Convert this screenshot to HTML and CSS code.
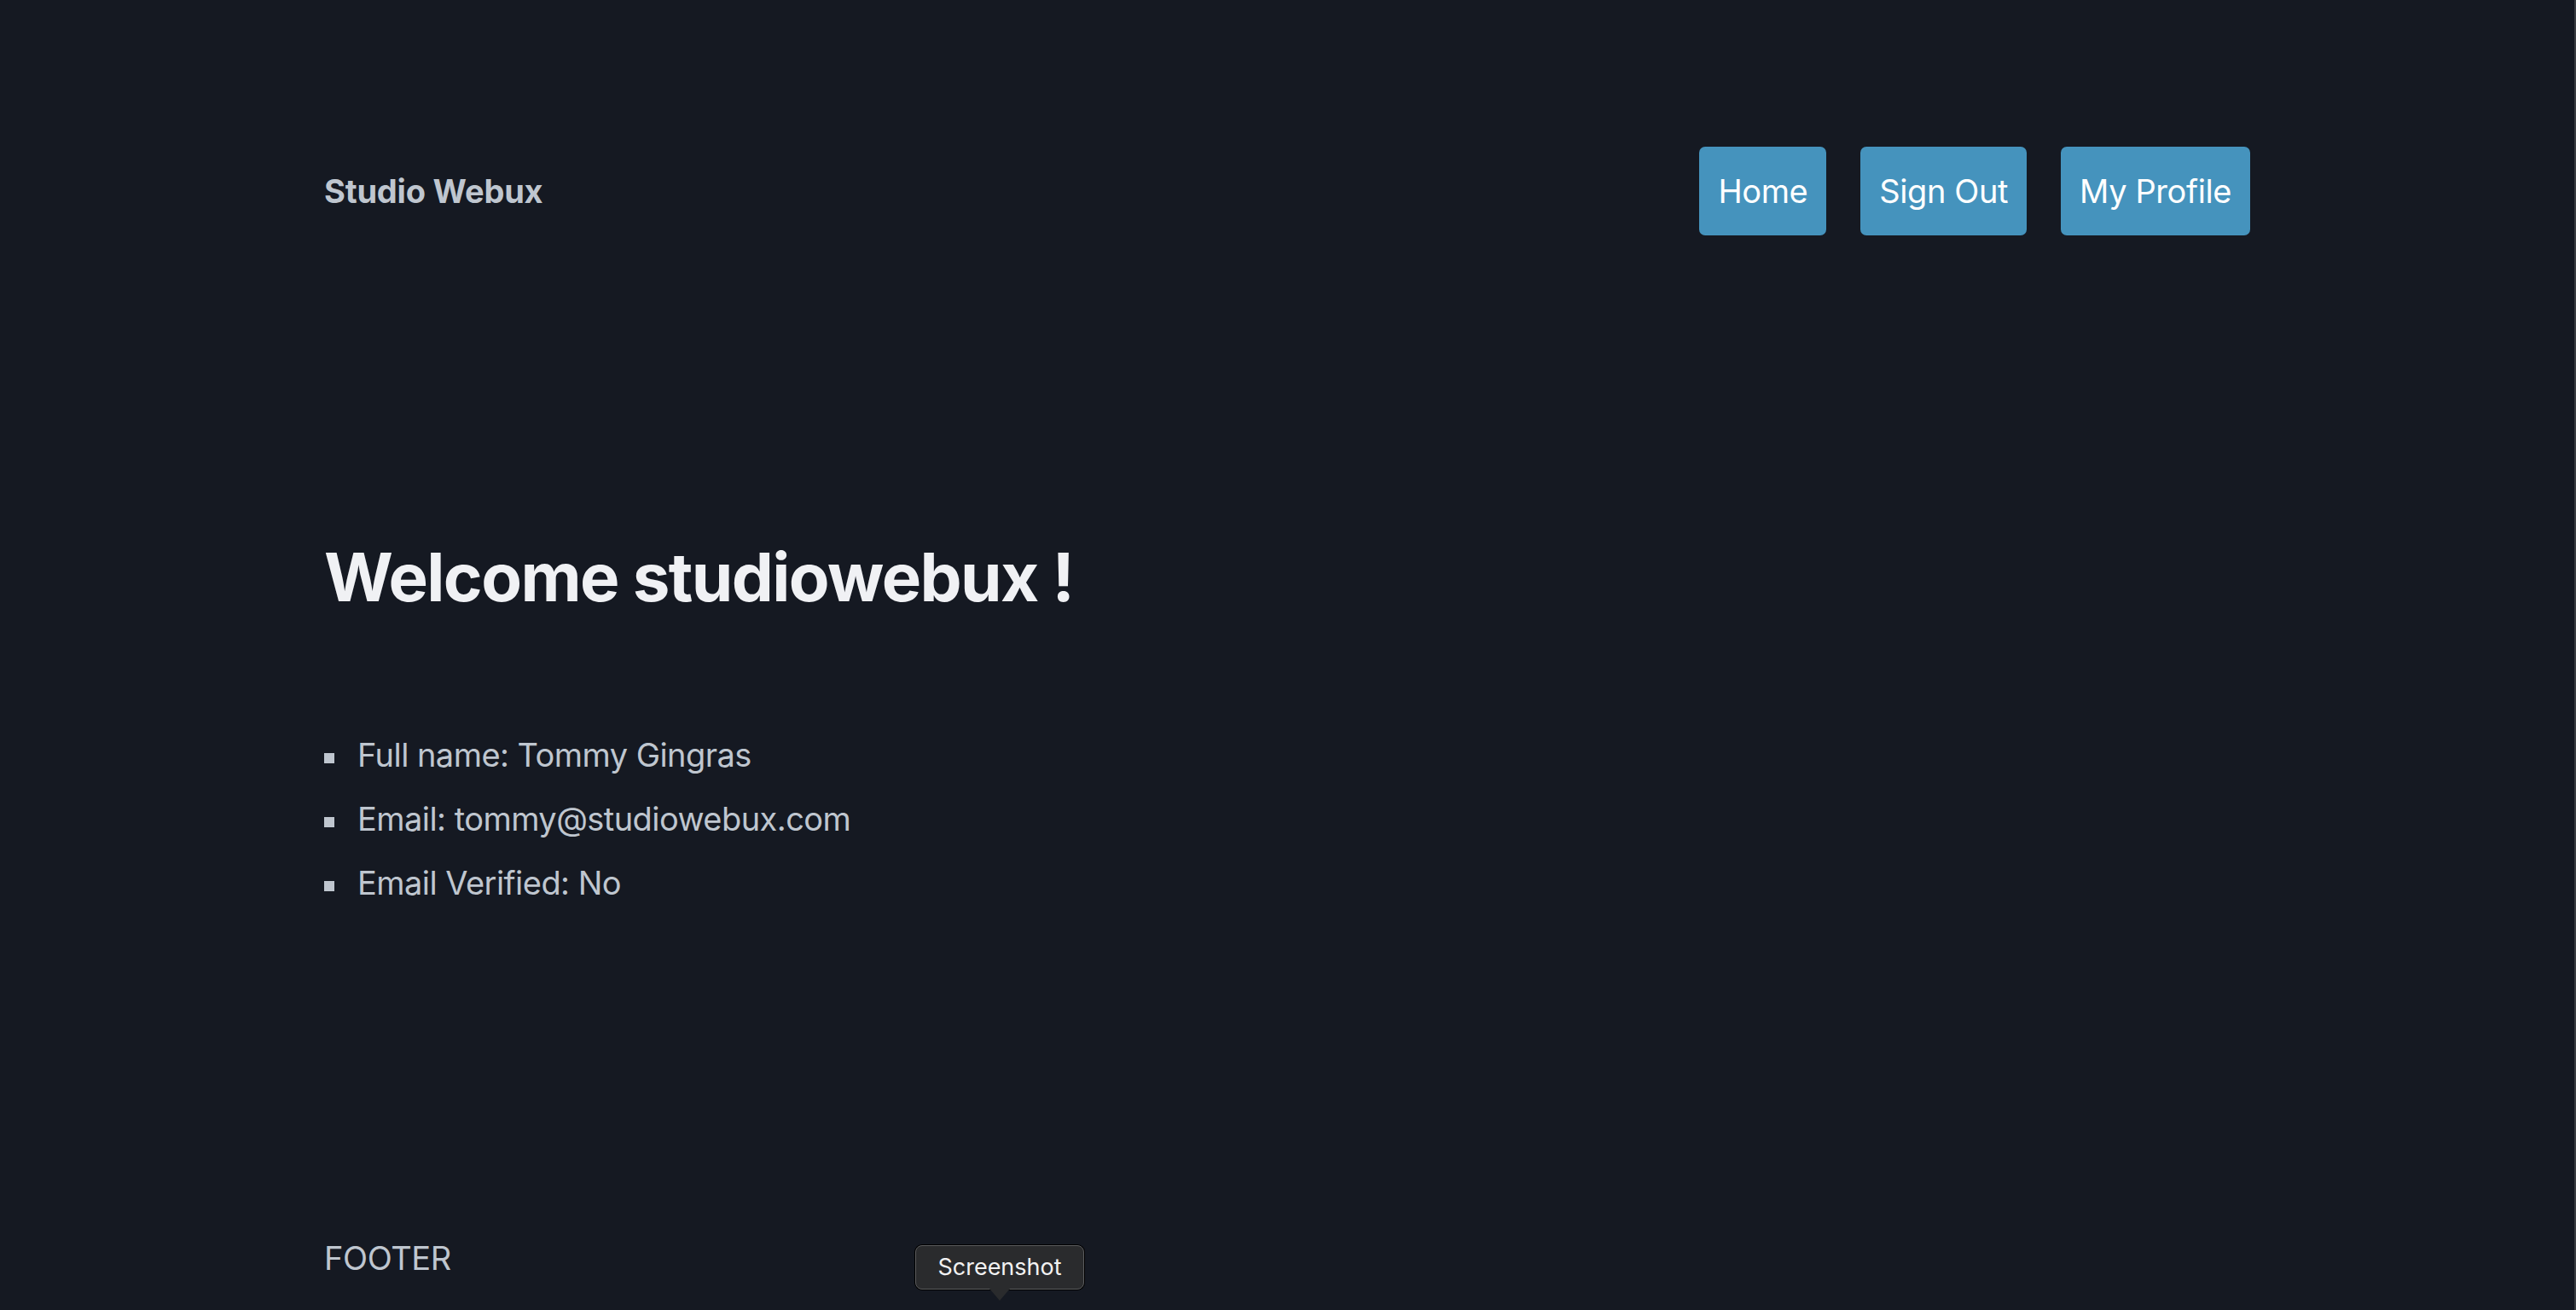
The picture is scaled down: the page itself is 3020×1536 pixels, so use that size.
FILE: index.html
```html
<!DOCTYPE html>
<html lang="en">
<head>
<meta charset="utf-8">
<title>Studio Webux</title>
<link rel="stylesheet" href="styles.css">
</head>
<body>
<div class="page">
  <div class="container">
    <header class="header">
      <div class="brand">Studio Webux</div>
      <nav class="nav">
        <a class="btn" href="#">Home</a>
        <a class="btn" href="#">Sign Out</a>
        <a class="btn" href="#">My Profile</a>
      </nav>
    </header>
    <main class="main">
      <h1 class="title">Welcome studiowebux !</h1>
      <ul class="info">
        <li class="info-item">Full name: Tommy Gingras</li>
        <li class="info-item">Email: tommy@studiowebux.com</li>
        <li class="info-item">Email Verified: No</li>
      </ul>
    </main>
    <footer class="footer">FOOTER</footer>
  </div>
  <div class="tooltip">Screenshot</div>
</div>
</body>
</html>
```

FILE: styles.css
```css
html, body {
  margin: 0;
  padding: 0;
  background: #151922;
}

body {
  font-family: Inter, "Noto Sans", "Liberation Sans", sans-serif;
  overflow: hidden;
}

.page {
  position: relative;
  height: 1536px;
  border-right: 2px solid #3a3d42;
  box-sizing: border-box;
}

.container {
  max-width: 2258px;
  margin: 0 auto;
}

.header {
  display: flex;
  align-items: center;
  justify-content: space-between;
  padding-top: 172px;
}

.brand {
  font-size: 38px;
  font-weight: 700;
  color: #bfc6cf;
  line-height: 1;
  letter-spacing: -0.2px;
}

.nav {
  display: flex;
  gap: 40px;
}

.btn {
  display: block;
  background: #4593bd;
  color: #ffffff;
  text-decoration: none;
  font-size: 38px;
  line-height: 60px;
  letter-spacing: -0.4px;
  padding: 22px 22px;
  border-radius: 7px;
}

.main {
  padding-top: 354px;
}

.title {
  margin: 0;
  font-size: 78px;
  line-height: 94px;
  font-weight: 700;
  letter-spacing: -1.6px;
  color: #f0f1f4;
}

.info {
  list-style: none;
  margin: 124px 0 0 0;
  padding: 0;
}

.info-item {
  font-size: 38px;
  line-height: 75px;
  letter-spacing: -0.55px;
  color: #bfc6cf;
}

.info-item::before {
  content: "";
  display: inline-block;
  width: 12px;
  height: 12px;
  background: #bfc6cf;
  vertical-align: middle;
  margin-right: 27px;
}

.footer {
  margin-top: 378px;
  font-size: 38px;
  line-height: 48px;
  letter-spacing: -0.4px;
  color: #bfc6cf;
}

.tooltip {
  position: absolute;
  left: 1073px;
  top: 1460px;
  width: 198px;
  height: 52px;
  box-sizing: border-box;
  background: #2a2b2d;
  border: 1px solid #5b5c5e;
  box-shadow: 0 0 0 1px #000;
  border-radius: 8px;
  color: #f2f2f2;
  font-size: 27px;
  line-height: 50px;
  text-align: center;
}

.tooltip::after {
  content: "";
  position: absolute;
  left: 50%;
  bottom: -14px;
  margin-left: -12px;
  border-left: 12px solid transparent;
  border-right: 12px solid transparent;
  border-top: 14px solid #2a2b2d;
}
```
